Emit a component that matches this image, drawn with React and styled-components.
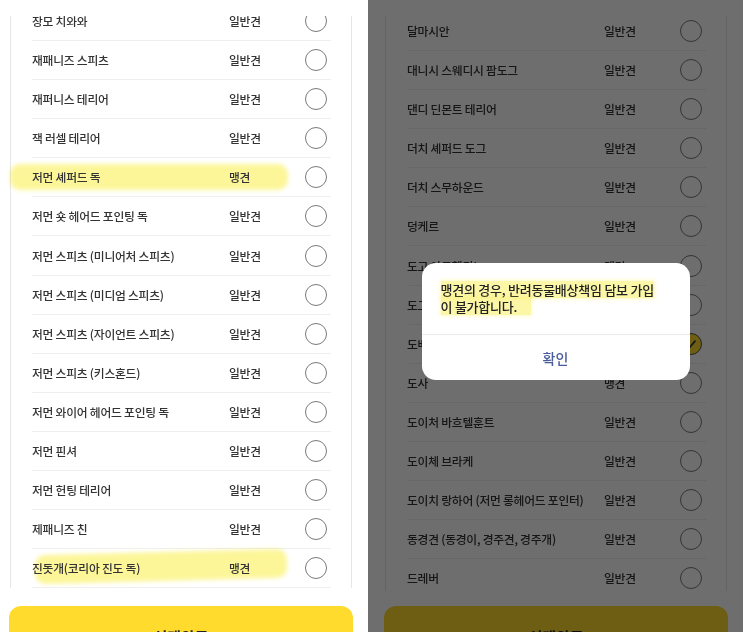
import styled, { createGlobalStyle } from 'styled-components';

// two phone captures side by side: breed list, and the same list dimmed behind an alert

const GlobalStyle = createGlobalStyle`
  html, body {
    margin: 0;
    padding: 0;
    background: #fff;
  }
  body {
    font-family: "Noto Sans CJK KR", "Noto Sans", sans-serif;
  }
`;

const Screen = styled.div`
  display: flex;
  width: 743px;
  height: 632px;
  overflow: hidden;
  background: #fff;
`;

const Phone = styled.div`
  position: relative;
  flex: 0 0 375px;
  height: 632px;
  margin-left: ${(p) => p.$shift || 0}px;
  display: grid;
  grid-template-rows: 16px 575px 1fr;
  overflow: hidden;
  background: #fff;
`;

const TopBar = styled.div`
  background: #fff;
`;

const Viewport = styled.div`
  overflow: hidden;
`;

const Card = styled.ul`
  list-style: none;
  margin: ${(p) => p.$offset}px 16px 0 17px;
  padding: 0 20px 0 21px;
  border-left: 1px solid #e6e6e6;
  border-right: 1px solid #e6e6e6;
`;

const Row = styled.li`
  position: relative;
  display: grid;
  grid-template-columns: 197px 76px 22px;
  align-items: center;
  height: 39.1px;
  box-sizing: border-box;
  padding-right: 4px;
  border-bottom: 1px solid #efefef;
  font-size: 11.8px;
  font-weight: 500;
  letter-spacing: -0.25px;
  color: #333;
  white-space: nowrap;
`;

const Name = styled.span`
  position: relative;
  margin-top: -1px;
`;

const Kind = styled.span`
  position: relative;
  margin-top: -1px;
`;

const Radio = styled.span`
  width: 22px;
  height: 22px;
  box-sizing: border-box;
  border-radius: 50%;
  border: 1.3px solid ${(p) => (p.$checked ? '#555' : '#7a7a7a')};
  background: ${(p) => (p.$checked ? '#ffd92e' : '#fff')};
  display: flex;
  align-items: center;
  justify-content: center;
`;

// highlighter pen stroke drawn over the screenshot
const Marker = styled.span`
  position: absolute;
  left: ${(p) => p.$left}px;
  top: ${(p) => p.$top}px;
  width: ${(p) => p.$width}px;
  height: ${(p) => p.$height}px;
  transform: rotate(${(p) => p.$tilt || 0}deg);
  background: rgba(250, 238, 70, 0.55);
  mix-blend-mode: multiply;
  border-radius: 10px;
  filter: blur(2px);
  pointer-events: none;
`;

const BottomBar = styled.div`
  padding: 15px 15px 0 16px;
  background: #fff;
`;

const ConfirmButton = styled.button`
  display: block;
  width: 344px;
  height: 60px;
  border: 0;
  border-radius: 12px;
  background: #ffdb2e;
  font-family: inherit;
  font-size: 15px;
  font-weight: 700;
  color: #222;
`;

const Dim = styled.div`
  position: absolute;
  inset: 0;
  box-sizing: border-box;
  padding-top: 11px;
  background: rgba(0, 0, 0, 0.57);
  display: flex;
  align-items: center;
  justify-content: center;
`;

const Dialog = styled.div`
  width: 268px;
  background: #fff;
  border-radius: 14px;
  overflow: hidden;
`;

const DialogBody = styled.div`
  height: 72px;
  box-sizing: border-box;
  padding: 18px 19px 0;
  border-bottom: 1px solid #ececec;
  display: flex;
  flex-direction: column;
  align-items: flex-start;
  font-size: 13px;
  font-weight: 500;
  line-height: 17px;
  letter-spacing: -0.25px;
  color: #222;
  white-space: nowrap;
`;

const Mark = styled.span`
  display: block;
  height: 17px;
  overflow: visible;
  background: rgba(250, 238, 80, 0.5);
  box-shadow: 0 0 4px 1px rgba(250, 238, 80, 0.35);
  padding-right: ${(p) => p.$tail || 0}px;
`;

const DialogAction = styled.button`
  display: block;
  width: 100%;
  height: 45px;
  border: 0;
  background: none;
  font-family: inherit;
  font-size: 14px;
  font-weight: 500;
  color: #4a5b9c;
`;

const leftBreeds = [
  { name: '장모 치와와', kind: '일반견' },
  { name: '재패니즈 스피츠', kind: '일반견' },
  { name: '재퍼니스 테리어', kind: '일반견' },
  { name: '잭 러셀 테리어', kind: '일반견' },
  { name: '저먼 셰퍼드 독', kind: '맹견', mark: { left: -22, top: 6, width: 278, height: 26, tilt: 0 } },
  { name: '저먼 숏 헤어드 포인팅 독', kind: '일반견' },
  { name: '저먼 스피츠 (미니어처 스피츠)', kind: '일반견' },
  { name: '저먼 스피츠 (미디엄 스피츠)', kind: '일반견' },
  { name: '저먼 스피츠 (자이언트 스피츠)', kind: '일반견' },
  { name: '저먼 스피츠 (키스혼드)', kind: '일반견' },
  { name: '저먼 와이어 헤어드 포인팅 독', kind: '일반견' },
  { name: '저먼 핀셔', kind: '일반견' },
  { name: '저먼 헌팅 테리어', kind: '일반견' },
  { name: '제패니즈 친', kind: '일반견' },
  { name: '진돗개(코리아 진도 독)', kind: '맹견', mark: { left: 3, top: 3, width: 252, height: 29, tilt: -1.5 } },
];

const rightBreeds = [
  { name: '달마시안', kind: '일반견' },
  { name: '대니시 스웨디시 팜도그', kind: '일반견' },
  { name: '댄디 딘몬트 테리어', kind: '일반견' },
  { name: '더치 셰퍼드 도그', kind: '일반견' },
  { name: '더치 스무하운드', kind: '일반견' },
  { name: '덩케르', kind: '일반견' },
  { name: '도고 아르헨티노', kind: '맹견' },
  { name: '도그 드 보르도', kind: '일반견' },
  { name: '도베르만', kind: '일반견', checked: true },
  { name: '도사', kind: '맹견' },
  { name: '도이처 바흐텔훈트', kind: '일반견' },
  { name: '도이체 브라케', kind: '일반견' },
  { name: '도이치 랑하어 (저먼 롱헤어드 포인터)', kind: '일반견' },
  { name: '동경견 (동경이, 경주견, 경주개)', kind: '일반견' },
  { name: '드레버', kind: '일반견' },
];

function Check() {
  return (
    <svg width="14" height="14" viewBox="0 0 14 14">
      <path d="M3 7.2 L6 10 L11 4.2" fill="none" stroke="#333" strokeWidth="1.8" strokeLinecap="round" strokeLinejoin="round" />
    </svg>
  );
}

function BreedList({ breeds, offset }) {
  return (
    <Viewport>
      <Card $offset={offset}>
        {breeds.map((b) => (
          <Row key={b.name}>
            {b.mark && (
              <Marker
                $left={b.mark.left}
                $top={b.mark.top}
                $width={b.mark.width}
                $height={b.mark.height}
                $tilt={b.mark.tilt}
              />
            )}
            <Name>{b.name}</Name>
            <Kind>{b.kind}</Kind>
            <Radio $checked={b.checked}>{b.checked && <Check />}</Radio>
          </Row>
        ))}
      </Card>
    </Viewport>
  );
}

export default function App() {
  return (
    <>
      <GlobalStyle />
      <Screen>
        <Phone $shift={-7}>
          <TopBar />
          <BreedList breeds={leftBreeds} offset={-14.1} />
          <BottomBar>
            <ConfirmButton>선택완료</ConfirmButton>
          </BottomBar>
        </Phone>

        <Phone>
          <TopBar />
          <BreedList breeds={rightBreeds} offset={-4.1} />
          <BottomBar>
            <ConfirmButton>선택완료</ConfirmButton>
          </BottomBar>
          <Dim>
            <Dialog>
              <DialogBody>
                <Mark>맹견의 경우, 반려동물배상책임 담보 가입</Mark>
                <Mark $tail={14}>이 불가합니다.</Mark>
              </DialogBody>
              <DialogAction>확인</DialogAction>
            </Dialog>
          </Dim>
        </Phone>
      </Screen>
    </>
  );
}
